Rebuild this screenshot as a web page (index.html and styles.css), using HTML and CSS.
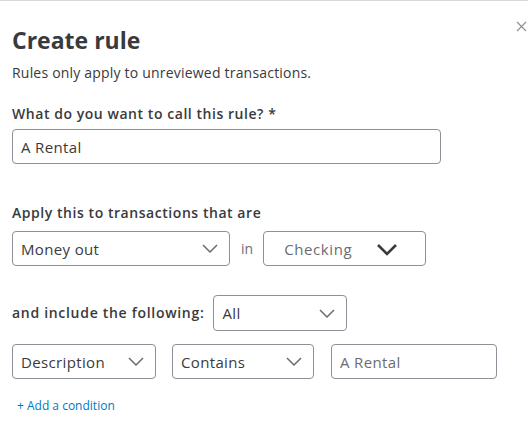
FILE: index.html
```html
<!DOCTYPE html>
<html>
<head>
<meta charset="utf-8">
<link rel="stylesheet" href="styles.css">
</head>
<body>
<div class="panel">
  <button class="close" aria-label="Close">
    <svg width="11" height="11" viewBox="0 0 11 11"><path d="M1 1L10 10M10 1L1 10" stroke="#8d9096" stroke-width="1.2" fill="none"/></svg>
  </button>
  <h1 class="title">Create rule</h1>
  <p class="subtitle">Rules only apply to unreviewed transactions.</p>

  <div class="label label-name">What do you want to call this rule? *</div>
  <div class="field field-name"><span class="value">A Rental</span></div>

  <div class="label label-apply">Apply this to transactions that are</div>
  <div class="row row-apply">
    <div class="field select select-money">
      <span class="value">Money out</span>
      <svg class="chev" width="16" height="9" viewBox="0 0 16 9"><path d="M1 1L8 8L15 1" stroke="#6b6c72" stroke-width="1.5" fill="none"/></svg>
    </div>
    <span class="in">in</span>
    <div class="field select select-checking">
      <span class="value">Checking</span>
      <svg class="chev-bold" width="22" height="13" viewBox="0 0 22 13"><path d="M2 2L11 11L20 2" stroke="#393a3d" stroke-width="2.6" fill="none"/></svg>
    </div>
  </div>

  <div class="row row-include">
    <span class="label inline">and include the following:</span>
    <div class="field select select-all">
      <span class="value">All</span>
      <svg class="chev" width="16" height="9" viewBox="0 0 16 9"><path d="M1 1L8 8L15 1" stroke="#6b6c72" stroke-width="1.5" fill="none"/></svg>
    </div>
  </div>

  <div class="row row-cond">
    <div class="field select select-desc">
      <span class="value">Description</span>
      <svg class="chev" width="16" height="9" viewBox="0 0 16 9"><path d="M1 1L8 8L15 1" stroke="#6b6c72" stroke-width="1.5" fill="none"/></svg>
    </div>
    <div class="field select select-contains">
      <span class="value">Contains</span>
      <svg class="chev" width="16" height="9" viewBox="0 0 16 9"><path d="M1 1L8 8L15 1" stroke="#6b6c72" stroke-width="1.5" fill="none"/></svg>
    </div>
    <div class="field field-text"><span class="value muted">A Rental</span></div>
  </div>

  <a class="add" href="#">+ Add a condition</a>
</div>
</body>
</html>
```

FILE: styles.css
```css
* { box-sizing: border-box; }
html, body { margin: 0; padding: 0; background: #fff; }
body {
  font-family: "Open Sans", "Liberation Sans", sans-serif;
  color: #393a3d;
  width: 528px;
  height: 436px;
  overflow: hidden;
}
.panel {
  position: relative;
  border-top: 1px solid #d4d7dc;
  padding: 0 12px;
  height: 436px;
}
.close {
  position: absolute;
  top: 20px;
  right: 1px;
  background: none;
  border: 0;
  padding: 0;
  width: 11px;
  height: 11px;
  line-height: 0;
}
.title {
  margin: 24px 0 0;
  font-size: 23px;
  line-height: 30px;
  font-weight: 700;
  color: #393a3d;
}
.subtitle {
  margin: 8px 0 0;
  font-size: 14px;
  line-height: 20px;
  letter-spacing: 0.2px;
  color: #393a3d;
}
.label {
  font-size: 14px;
  line-height: 20px;
  font-weight: 600;
  letter-spacing: 0.55px;
  color: #393a3d;
}
.label-name { margin-top: 21px; }
.label-apply { margin-top: 39px; }
.field {
  display: flex;
  align-items: center;
  height: 35px;
  border: 1px solid #8d9096;
  border-radius: 4px;
  padding: 0 8px;
  font-size: 15px;
  letter-spacing: 0.35px;
}
.field-name { margin-top: 5px; width: 429px; }
.row { display: flex; align-items: center; }
.row-apply { margin-top: 8px; }
.select { justify-content: space-between; padding-right: 11px; }
.select-money { width: 218px; }
.in { margin: 0 10px 0 11px; font-size: 14px; color: #6b6c72; }
.select-checking { width: 163px; padding-left: 20px; padding-right: 27px; }
.select-checking .value { color: #6b6c72; font-size: 15px; letter-spacing: 0.6px; }
.chev-bold { margin-top: 2px; }
.row-include { margin-top: 29px; }
.row-include .field { height: 36px; }
.inline { margin-right: 9px; letter-spacing: 0.7px; }
.select-all { width: 134px; }
.row-cond { margin-top: 13px; }
.select-desc { width: 144px; }
.select-contains { width: 142px; margin-left: 16px; }
.field-text { width: 166px; margin-left: 17px; }
.muted { color: #6b6c72; }
.add {
  display: inline-block;
  margin: 19px 0 0 5px;
  font-size: 12px;
  line-height: 16px;
  color: #0077c5;
  text-decoration: none;
}
```
